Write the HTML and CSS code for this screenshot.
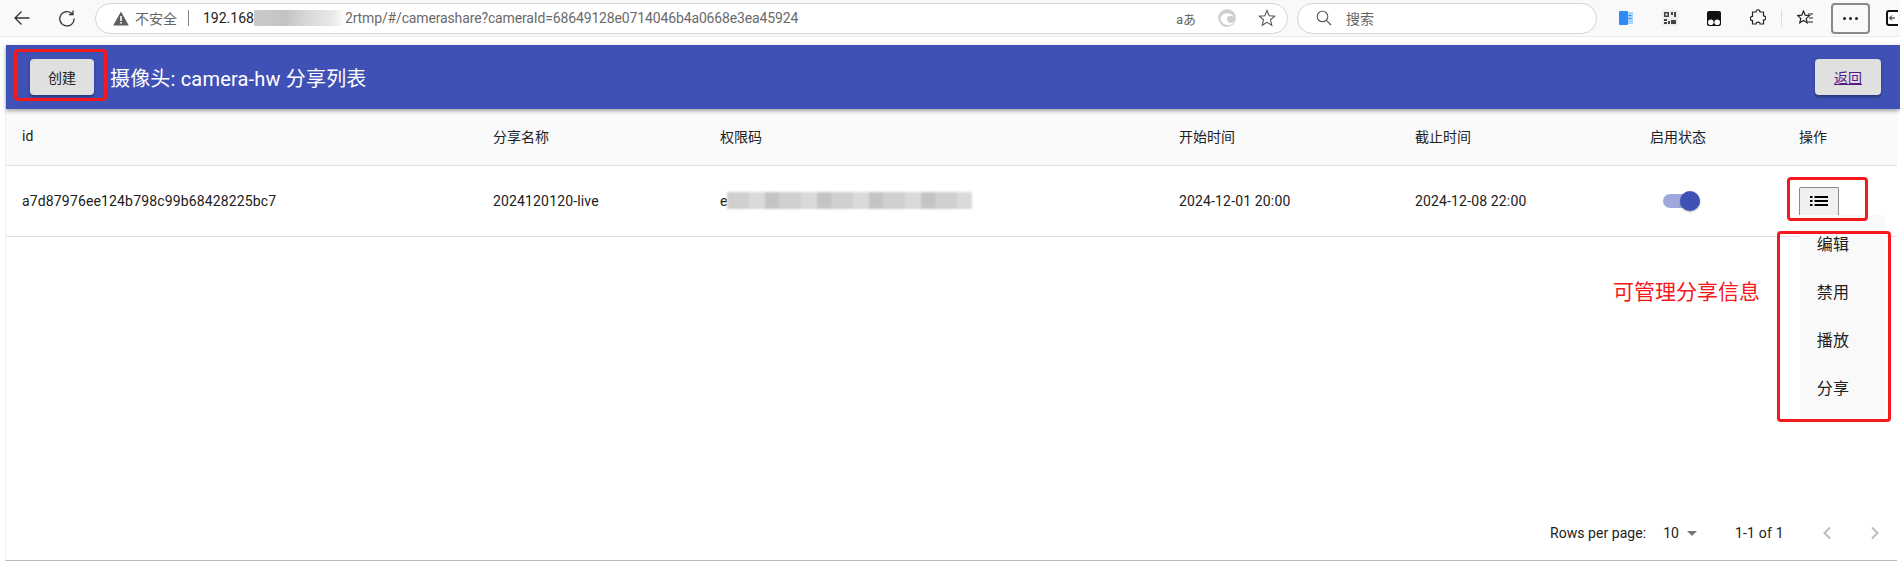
FILE: index.html
```html
<!DOCTYPE html>
<html lang="zh-CN">
<head>
  <meta charset="UTF-8" />
  <title>摄像头分享列表</title>
  <link rel="stylesheet" href="styles.css">
</head>
<body>
  <!-- barra del navegador -->
  <div class="browser-bar">
    <svg class="nav-icon back" width="18" height="18" viewBox="0 0 18 18"><path d="M16.5 9H2M8.5 2.5 2 9l6.500 6.500" fill="none" stroke="#333" stroke-width="1.300"/></svg>
    <svg class="nav-icon reload" width="18" height="18" viewBox="0 0 18 18"><path d="M14.600 5.200A7.200 7.200 0 1 0 16.200 9.500M15 1.500v4h-4" fill="none" stroke="#333" stroke-width="1.300"/></svg>
    <div class="address">
      <svg width="16" height="15" viewBox="0 0 16 15"><path d="M8 0.500 15.800 14.500H0.200Z" fill="#5f5f5f"/><rect x="7.200" y="5" width="1.600" height="5" fill="#fff"/><rect x="7.200" y="11" width="1.600" height="1.600" fill="#fff"/></svg>
      <span class="insecure">不安全</span>
      <span class="sep"></span>
      <span class="url-host">192.168</span><span class="blur-url"></span><span class="url-rest">2rtmp/#/camerashare?cameraId=68649128e0714046b4a0668e3ea45924</span>
      <span class="addr-tools">
        <span class="read-aloud">aあ</span>
        <svg width="20" height="20" viewBox="0 0 18 18"><circle cx="9" cy="9" r="8" fill="#cfcfcf"/><path d="M3 10c1-6 10-7 12-2-2-1.500-6-1.500-6 2s4 4.500 6.500 2c-2 5-10 5-12.500-2" fill="#fff"/></svg>
        <svg width="18" height="18" viewBox="0 0 18 18"><path d="M9 1.500 11.200 6.700 16.700 7.200 12.500 10.800 13.800 16.300 9 13.400 4.200 16.300 5.500 10.800 1.300 7.200 6.800 6.700Z" fill="none" stroke="#555" stroke-width="1.100"/></svg>
      </span>
    </div>
    <div class="search">
      <svg width="16" height="16" viewBox="0 0 16 16"><circle cx="6.500" cy="6.500" r="5.300" fill="none" stroke="#555" stroke-width="1.100"/><path d="M10.400 10.400 15 15" stroke="#555" stroke-width="1.100"/></svg>
      <span>搜索</span>
    </div>
    <div class="ext-icons">
      <svg class="ext" width="16" height="16" viewBox="0 0 16 16"><rect x="7" y="2" width="8" height="12" fill="#a9d3fb"/><rect x="1" y="1" width="9" height="14" rx="1" fill="#2f8cf5"/><rect x="10.500" y="5" width="3" height="1" fill="#2f8cf5"/><rect x="10.500" y="8" width="3" height="1" fill="#2f8cf5"/></svg>
      <svg class="ext" width="16" height="16" viewBox="0 0 16 16"><rect width="16" height="16" fill="#eee"/><path d="M2 2h5v5H2zM3.500 3.500v2h2v-2zM9 2h2v3H9zM12 2h2v5h-2zM2 9h3v2H2zM6 11h2v3H6zM2 12h3v2H2zM9 10h5v4H9z" fill="#444"/></svg>
      <svg class="ext" width="16" height="16" viewBox="0 0 16 16"><path d="M3 1h10a2 2 0 0 1 2 2v11a2 2 0 0 1-2 2H3a2 2 0 0 1-2-2V3a2 2 0 0 1 2-2Z" fill="#111"/><circle cx="4.800" cy="12.300" r="2.800" fill="#fff"/><circle cx="11.200" cy="12.300" r="2.800" fill="#fff"/></svg>
      <svg class="ext" width="16" height="18" viewBox="0 0 16 18"><path d="M6 3c0-3 4-3 4 0h3.500v4c3-.5 3 4.500 0 4v4H10c.5-2.500-4-2.500-4 0H2.500v-3.500c-3 .5-3-4.500 0-4V3Z" fill="none" stroke="#222" stroke-width="1.200"/></svg>
      <span class="ext-sep"></span>
      <svg class="ext" width="18" height="16" viewBox="0 0 18 16"><path d="M6.500 1 8.200 5.200 12.500 5.600 9.200 8.400 10.200 12.700 6.500 10.400 2.800 12.700 3.800 8.400 0.800 5.600 4.800 5.200Z" fill="none" stroke="#222" stroke-width="1.200"/><path d="M11 4h5M12 8h4M11 12h5" stroke="#222"/></svg>
      <div class="more-btn"><i></i><i></i><i></i></div>
      <svg class="ext side" width="12" height="16" viewBox="0 0 12 16"><path d="M12 1H3a2 2 0 0 0-2 2v10a2 2 0 0 0 2 2h9" fill="#fff" stroke="#111" stroke-width="2"/><path d="M9 8H4M6 5.500 3.500 8 6 10.500" stroke="#111" fill="none"/></svg>
    </div>
  </div>

  <div class="page">
    <header class="app-bar">
      <button class="btn create">创建</button>
      <h1>摄像头: camera-hw 分享列表</h1>
      <button class="btn back-btn"><a href="#">返回</a></button>
    </header>

    <table class="share-table">
      <colgroup>
        <col class="c-id"><col class="c-name"><col class="c-code"><col class="c-start"><col class="c-end"><col class="c-state"><col class="c-op">
      </colgroup>
      <thead>
        <tr>
          <th>id</th><th>分享名称</th><th>权限码</th><th>开始时间</th><th>截止时间</th><th>启用状态</th><th>操作</th>
        </tr>
      </thead>
      <tbody>
        <tr>
          <td>a7d87976ee124b798c99b68428225bc7</td>
          <td>2024120120-live</td>
          <td><span class="code">e<span class="blur-code"></span></span></td>
          <td>2024-12-01 20:00</td>
          <td>2024-12-08 22:00</td>
          <td><span class="toggle"><span class="knob"></span></span></td>
          <td>
            <div class="menu-wrap">
              <button class="menu-btn">
                <svg width="18" height="12" viewBox="0 0 18 12"><path d="M0 1h2.500v2H0zM0 5h2.500v2H0zM0 9h2.500v2H0zM4.500 1H18v2H4.500zM4.500 5H18v2H4.500zM4.500 9H18v2H4.500z" fill="#000"/></svg>
              </button>
              <ul class="menu">
                <li>编辑</li><li>禁用</li><li>播放</li><li>分享</li>
              </ul>
            </div>
          </td>
        </tr>
      </tbody>
    </table>

    <footer class="pager">
      <span class="rows-label">Rows per page:</span>
      <span class="rows-value">10</span>
      <span class="caret"></span>
      <span class="range">1-1 of 1</span>
      <svg class="chev" width="10" height="14" viewBox="0 0 10 14"><path d="M8 1.500 2.500 7 8 12.500" fill="none" stroke="#bdbdbd" stroke-width="2"/></svg>
      <svg class="chev next" width="10" height="14" viewBox="0 0 10 14"><path d="M2 1.500 7.500 7 2 12.500" fill="none" stroke="#bdbdbd" stroke-width="2"/></svg>
    </footer>
  </div>

  <!-- anotaciones en rojo sobre la captura -->
  <div class="mark mark-create"></div>
  <div class="mark mark-btn"></div>
  <div class="mark mark-menu"></div>
  <div class="mark-text">可管理分享信息</div>
</body>
</html>
```

FILE: styles.css
```css
:root {
  --blue: #3f51b5;
  --line: #e0e0e0;
  --text: #212121;
  --red: #f5181c;
}
* {
  box-sizing: border-box;
}
html, body {
  height: 100%;
}
body {
  margin: 0;
  position: relative;
  overflow: hidden;
  background: #fff;
  color: var(--text);
  font-family: Roboto, "Noto Sans CJK SC", sans-serif;
  font-size: 14px;
}

/* browser toolbar */
.browser-bar {
  height: 37px;
  display: flex;
  align-items: center;
  padding-left: 13px;
  background: #f9f9f9;
  border-bottom: 1px solid #ececec;
}
.nav-icon.reload {
  margin-left: 27px;
}
.address {
  width: 1193px;
  height: 31px;
  margin-left: 19px;
  display: flex;
  align-items: center;
  padding-left: 17px;
  background: #fff;
  border: 1px solid #d4d4d4;
  border-radius: 16px;
  font-size: 14px;
  color: #6a6a6a;
}
.insecure {
  margin-left: 6px;
  color: #666;
}
.sep {
  width: 1px;
  height: 16px;
  background: #888;
  margin: 0 14px 0 11px;
}
.url-host {
  color: #222;
}
.blur-url {
  width: 92px;
  height: 16px;
  background: linear-gradient(90deg, #c4c4c2 0, #bdbdbb 35%, #d6d6d4 60%, #e6e6e4 85%, #fff 100%);
  opacity: .9;
}
.url-rest {
  color: #6a6a6a;
  margin-left: -1px;
  letter-spacing: -.14px;
}
.addr-tools {
  margin-left: auto;
  display: flex;
  align-items: center;
  gap: 21px;
  padding-right: 11px;
}
.read-aloud {
  font-size: 13px;
  color: #666;
}
.search {
  width: 300px;
  height: 31px;
  margin-left: 9px;
  display: flex;
  align-items: center;
  gap: 14px;
  padding-left: 18px;
  background: #fff;
  border: 1px solid #d4d4d4;
  border-radius: 16px;
  color: #666;
  font-size: 14px;
}
.ext-icons {
  display: flex;
  align-items: center;
  margin-left: 21px;
  gap: 28px;
  flex: 1;
}
.ext-sep {
  width: 1px;
  height: 16px;
  background: #ddd;
  margin: 0 -13px;
}
.more-btn {
  width: 39px;
  height: 31px;
  margin: 0 -14px -1px -12px;
  display: flex;
  align-items: center;
  justify-content: center;
  gap: 3px;
  border: 2px solid #858a8c;
  border-radius: 4px;
}
.more-btn i {
  width: 3px;
  height: 3px;
  background: #222;
  border-radius: 50%;
}
.ext.side {
  margin-left: 2px;
}

/* app */
.page {
  margin: 8px 3px 0 5px;
  height: 516px;
  display: flex;
  flex-direction: column;
  border-bottom: 1px solid #bdbdbd;
  border-left: 1px solid #f0f0f0;
}
.app-bar {
  height: 64px;
  margin-right: -3px;
  flex-shrink: 0;
  display: flex;
  align-items: center;
  padding: 0 19px 0 24px;
  background: var(--blue);
  color: #fff;
  box-shadow: 0 2px 4px rgba(0, 0, 0, .35);
  position: relative;
}
.app-bar h1 {
  margin: 0 0 0 16px;
  font-size: 20px;
  font-weight: 400;
  letter-spacing: .18px;
  flex: 1;
}
.btn {
  width: 64px;
  height: 36px;
  border: none;
  border-radius: 4px;
  background: #e0e0e0;
  color: #212121;
  font-family: inherit;
  font-size: 14px;
  box-shadow: 0 2px 3px rgba(0, 0, 0, .35);
}
.back-btn {
  width: 66px;
}
.btn a {
  color: #551a8b;
}

/* table */
.share-table {
  width: 100%;
  table-layout: fixed;
  border-collapse: collapse;
}
.c-id { width: 471px; }
.c-name { width: 227px; }
.c-code { width: 459px; }
.c-start { width: 236px; }
.c-end { width: 235px; }
.c-state { width: 149px; }
.c-op { width: 114px; }
.share-table th {
  height: 56px;
  padding: 0 16px 2px;
  text-align: left;
  font-weight: 400;
  background: #fafafa;
  border-bottom: 1px solid var(--line);
}
.share-table td {
  height: 71px;
  padding: 0 16px;
  letter-spacing: .15px;
  border-bottom: 1px solid var(--line);
}
.code {
  display: flex;
  align-items: center;
}
.blur-code {
  width: 245px;
  height: 17px;
  margin-left: -1px;
  background: repeating-linear-gradient(90deg, #cfcfcd 0 22px, #dadad8 22px 38px, #c4c4c2 38px 52px);
  filter: blur(1px);
}
.toggle {
  display: block;
  width: 37px;
  height: 14px;
  margin-left: 13px;
  border-radius: 7px;
  background: #9fa8da;
  position: relative;
}
.knob {
  position: absolute;
  right: 0;
  top: -3px;
  width: 20px;
  height: 20px;
  border-radius: 50%;
  background: var(--blue);
  box-shadow: 0 1px 2px rgba(0, 0, 0, .3);
}
.menu-wrap {
  position: relative;
  height: 28px;
}
.menu-btn {
  width: 40px;
  height: 28px;
  padding: 0;
  display: flex;
  align-items: center;
  justify-content: center;
  background: #f0f0f0;
  border: 1px solid #8a8a8a;
  border-bottom: none;
  border-radius: 2px 2px 0 0;
}
.menu {
  position: absolute;
  left: 1px;
  top: 28px;
  width: 85px;
  height: 206px;
  margin: 0;
  padding: 6px 19px 0 0;
  list-style: none;
  background: #f9f9f9;
  z-index: 2;
}
.menu li {
  height: 48px;
  text-align: center;
  line-height: 48px;
  font-size: 16px;
}

/* pagination */
.pager {
  margin-top: auto;
  height: 54px;
  display: flex;
  align-items: center;
  padding-left: 1544px;
  font-size: 14px;
}
.rows-label {
  letter-spacing: .05px;
}
.rows-value {
  margin-left: 17px;
}
.caret {
  width: 0;
  height: 0;
  margin-left: 8px;
  border-left: 5px solid transparent;
  border-right: 5px solid transparent;
  border-top: 5px solid #757575;
}
.range {
  margin-left: 38px;
  letter-spacing: .2px;
}
.chev {
  margin-left: 38px;
}
.chev.next {
  margin-left: 38px;
}

/* annotations */
.mark {
  position: absolute;
  border: 3px solid var(--red);
  border-radius: 4px;
  z-index: 3;
}
.mark-create {
  left: 14px;
  top: 49px;
  width: 93px;
  height: 52px;
}
.mark-btn {
  left: 1787px;
  top: 177px;
  width: 81px;
  height: 44px;
}
.mark-menu {
  left: 1777px;
  top: 231px;
  width: 114px;
  height: 191px;
}
.mark-text {
  position: absolute;
  left: 1613px;
  top: 275px;
  color: var(--red);
  font-family: "Noto Sans CJK SC", sans-serif;
  font-size: 21px;
  line-height: 30px;
  z-index: 3;
}
```
